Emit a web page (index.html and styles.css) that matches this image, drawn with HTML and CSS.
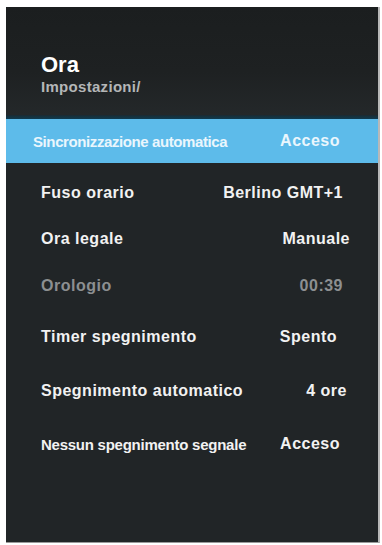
FILE: index.html
```html
<!DOCTYPE html>
<html lang="it">
<head>
<meta charset="utf-8">
<title>Ora</title>
<link rel="stylesheet" href="styles.css">
</head>
<body>
<div class="panel">
  <div class="header">
    <div class="title">Ora</div>
    <div class="crumb">Impostazioni/</div>
  </div>
  <div class="sep"></div>
  <div class="row selected">
    <span class="label">Sincronizzazione automatica</span>
    <span class="value v-acceso">Acceso</span>
  </div>
  <div class="list">
    <div class="row r1">
      <span class="label">Fuso orario</span>
      <span class="value">Berlino GMT+1</span>
    </div>
    <div class="row r2">
      <span class="label">Ora legale</span>
      <span class="value v-manuale">Manuale</span>
    </div>
    <div class="row r3 disabled">
      <span class="label">Orologio</span>
      <span class="value">00:39</span>
    </div>
    <div class="row r4">
      <span class="label">Timer spegnimento</span>
      <span class="value v-spento">Spento</span>
    </div>
    <div class="row r5">
      <span class="label">Spegnimento automatico</span>
      <span class="value v-ore">4 ore</span>
    </div>
    <div class="row r6">
      <span class="label small">Nessun spegnimento segnale</span>
      <span class="value v-acceso">Acceso</span>
    </div>
  </div>
</div>
</body>
</html>
```

FILE: styles.css
```css
html, body {
  margin: 0;
  padding: 0;
  background: #ffffff;
}
body {
  width: 382px;
  height: 545px;
  overflow: hidden;
  font-family: "Liberation Sans", Arial, sans-serif;
}
.panel {
  margin: 7px 0 0 6px;
  width: 374px;
  height: 536px;
  background: #212527;
  border-right: 2px solid #b8b8b8;
  border-bottom: 1px solid #9a9a9a;
  box-sizing: border-box;
  display: flex;
  flex-direction: column;
}
.header {
  height: 108px;
  background: linear-gradient(#1b1e1f 0%, #1e2122 60%, #24282a 100%);
  padding: 45px 0 0 35px;
  box-sizing: border-box;
}
.title {
  color: #ffffff;
  font-weight: bold;
  font-size: 22px;
  line-height: 25px;
}
.crumb {
  color: #b4b6b7;
  font-weight: bold;
  font-size: 15px;
  letter-spacing: 0.3px;
  line-height: 17px;
  margin-top: 1px;
}
.sep {
  height: 4px;
  background: linear-gradient(#1b2a31, #0f3b4f);
}
.row {
  display: flex;
  align-items: center;
  justify-content: space-between;
  padding: 0 35px 0 35px;
  color: #f2f2f2;
  font-weight: bold;
  font-size: 16px;
  letter-spacing: 0.5px;
}
.row.selected {
  height: 44px;
  background: #5dbbea;
  color: #eaf6fd;
  padding-left: 27px;
  font-size: 15px;
}
.row.selected .label {
  letter-spacing: -0.4px;
}
.row.selected .value {
  font-size: 16px;
}
.list {
  display: flex;
  flex-direction: column;
  padding-top: 7px;
}
.r1 { height: 46px; }
.r2 { height: 46px; }
.r3 { height: 48px; }
.r4 { height: 53px; }
.r5 { height: 56px; }
.r6 { height: 50px; }
.disabled { color: #8c8f91; }
.label.small {
  font-size: 15px;
  letter-spacing: -0.25px;
}
.v-acceso { margin-right: 3px; }
.v-manuale { margin-right: -7px; }
.v-spento { margin-right: 6px; }
.v-ore { margin-right: -4px; }
```
